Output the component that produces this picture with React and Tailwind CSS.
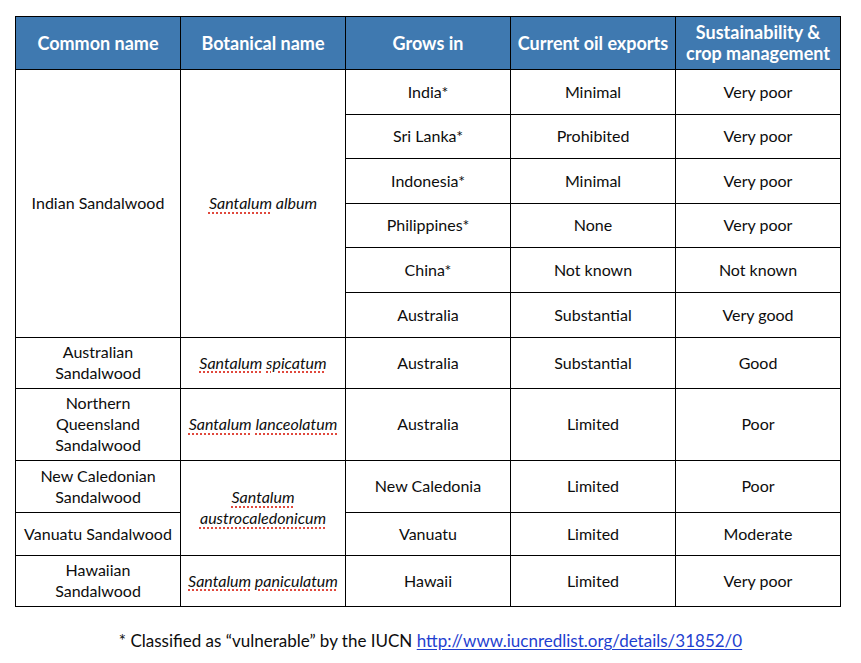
import React from "react";

const F = { fontFamily: "Lato, 'Noto Sans', sans-serif" };

function Sp({ children }) {
  return (
    <span className="underline decoration-dotted decoration-[#e0483c] underline-offset-[3px] decoration-[1.5px]">
      {children}
    </span>
  );
}

function H({ children }) {
  return (
    <div className="flex items-center justify-center text-center bg-[#3f79b0] text-white font-bold text-[18px] leading-[21px] border-r border-b border-black">
      {children}
    </div>
  );
}

function C({ children, className = "" }) {
  return (
    <div className={"flex items-center justify-center text-center text-[16px] leading-[21px] text-[#0d0d0d] border-r border-b border-black px-1 pb-[2px] " + className}>
      {children}
    </div>
  );
}

export default function App() {
  return (
    <div className="w-[861px] h-[663px] bg-white" style={F}>
      <div className="pt-[16px] pl-[15px]">
        <div className="grid grid-cols-[165px_165px_165px_165px_165px] grid-rows-[53px_45px_44px_45px_44px_45px_45px_51px_72px_52px_43px_51px] border-l border-t border-black w-[826px]">
          <H>Common name</H>
          <H>Botanical name</H>
          <H>Grows in</H>
          <H>Current oil exports</H>
          <H>
            Sustainability &amp;
            <br />
            crop management
          </H>

          <C className="row-span-6">Indian Sandalwood</C>
          <C className="row-span-6 italic">
            <span>
              <Sp>Santalum</Sp> album
            </span>
          </C>
          <C>India*</C>
          <C>Minimal</C>
          <C>Very poor</C>

          <C>Sri Lanka*</C>
          <C>Prohibited</C>
          <C>Very poor</C>

          <C>Indonesia*</C>
          <C>Minimal</C>
          <C>Very poor</C>

          <C>Philippines*</C>
          <C>None</C>
          <C>Very poor</C>

          <C>China*</C>
          <C>Not known</C>
          <C>Not known</C>

          <C>Australia</C>
          <C>Substantial</C>
          <C>Very good</C>

          <C>
            Australian
            <br />
            Sandalwood
          </C>
          <C className="italic">
            <span>
              <Sp>Santalum</Sp> <Sp>spicatum</Sp>
            </span>
          </C>
          <C>Australia</C>
          <C>Substantial</C>
          <C>Good</C>

          <C>
            Northern
            <br />
            Queensland
            <br />
            Sandalwood
          </C>
          <C className="italic">
            <span>
              <Sp>Santalum</Sp> <Sp>lanceolatum</Sp>
            </span>
          </C>
          <C>Australia</C>
          <C>Limited</C>
          <C>Poor</C>

          <C>
            New Caledonian
            <br />
            Sandalwood
          </C>
          <C className="row-span-2 italic">
            <span>
              <Sp>Santalum</Sp>
              <br />
              <Sp>austrocaledonicum</Sp>
            </span>
          </C>
          <C>New Caledonia</C>
          <C>Limited</C>
          <C>Poor</C>

          <C>Vanuatu Sandalwood</C>
          <C>Vanuatu</C>
          <C>Limited</C>
          <C>Moderate</C>

          <C>
            Hawaiian
            <br />
            Sandalwood
          </C>
          <C className="italic">
            <span>
              <Sp>Santalum</Sp> <Sp>paniculatum</Sp>
            </span>
          </C>
          <C>Hawaii</C>
          <C>Limited</C>
          <C>Very poor</C>
        </div>
      </div>
      <div className="mt-[23px] text-center text-[17px] leading-[21px] text-[#0d0d0d]">
        * Classified as “vulnerable” by the IUCN{" "}
        <span className="text-[#1f3fd0] underline underline-offset-2">
          http://www.iucnredlist.org/details/31852/0
        </span>
      </div>
    </div>
  );
}
